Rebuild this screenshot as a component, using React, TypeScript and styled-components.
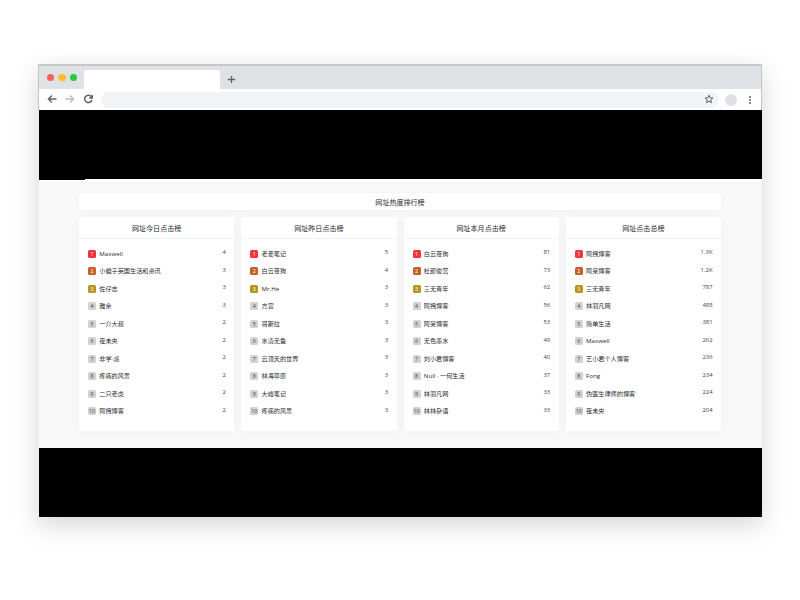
import React from 'react';
import styled, { createGlobalStyle } from 'styled-components';

const GlobalStyle = createGlobalStyle`
  * { box-sizing: border-box; }
  body {
    margin: 0;
    background: #fff;
    font-family: "Open Sans", "Noto Sans CJK SC", sans-serif;
    color: #282a2d;
  }
`;

const Stage = styled.div`
  width: 800px;
  height: 600px;
  padding: 64px 38px 0;
  overflow: hidden;
`;

const BrowserWindow = styled.div`
  width: 724px;
  height: 453px;
  padding-left: 1px;
  box-shadow: 0 8px 24px rgba(0, 0, 0, 0.17);
  background: #f0f0f0;
`;

const Chrome = styled.header`
  height: 46px;
  margin-left: -1px;
  border: solid #c6c6c6;
  border-width: 2px 1px 0;
  border-radius: 1px 1px 0 0;
  background: #fff;
`;

const TabBar = styled.div`
  display: flex;
  height: 23px;
  background: #dee1e6;
`;

const Lights = styled.div`
  display: flex;
  gap: 4px;
  width: 44.5px;
  padding: 7.5px 0 0 8px;
`;

const Light = styled.i<{ $color: string }>`
  width: 7.3px;
  height: 7.3px;
  border-radius: 50%;
  background: ${(p) => p.$color};
`;

const TabShelf = styled.div`
  width: 136px;
  padding-top: 4px;
`;

const Tab = styled.div`
  height: 19px;
  border-radius: 3px 3px 0 0;
  background: #fff;
`;

const NewTab = styled.div`
  padding: 9px 0 0 7.5px;
  line-height: 0;
`;

const Toolbar = styled.div`
  display: flex;
  align-items: center;
  height: 21px;
  padding: 0 6px 0 8px;
`;

const NavIcons = styled.div`
  display: flex;
  gap: 8px;
  width: 54px;
  margin-top: -1px;
`;

const Address = styled.div`
  display: flex;
  align-items: center;
  justify-content: flex-end;
  width: 618px;
  height: 16px;
  padding: 0 5px 1px 0;
  border-radius: 8px;
  background: #f1f3f4;
`;

const Avatar = styled.i`
  width: 12px;
  height: 12px;
  margin: 0 11px 0 6px;
  border-radius: 50%;
  background: #dee1e6;
`;

const DarkBand = styled.div`
  height: 69px;
  width: 723px;
  background: #000;
`;

const Strip = styled.div`
  height: 3px;
  width: 723px;
  background: #fff;
`;

const StripEdge = styled.div`
  width: 46px;
  height: 1px;
  background: #000;
`;

const Page = styled.main`
  width: 723px;
  height: 266px;
  padding: 11px 41px 0 40px;
  background: #f8f8f8;
`;

const Banner = styled.h1`
  margin: 0 0 7px;
  height: 17px;
  border-radius: 1.5px;
  background: #fff;
  box-shadow: 0 1px 8px rgba(0, 0, 0, 0.035);
  font-size: 7.05px;
  line-height: 18px;
  font-weight: 400;
  text-align: center;
`;

const Columns = styled.div`
  display: grid;
  grid-template-columns: repeat(4, 1fr);
  gap: 7px;
`;

const Card = styled.section`
  height: 214px;
  border-radius: 1.5px;
  background: #fff;
  box-shadow: 0 1px 8px rgba(0, 0, 0, 0.035);
`;

const CardTitle = styled.h2`
  margin: 0;
  height: 22px;
  border-bottom: 1px solid #f3f3f3;
  font-size: 7.05px;
  line-height: 23px;
  font-weight: 400;
  text-align: center;
`;

const Ranking = styled.ol`
  margin: 0;
  padding: 6px 8.5px 0 9px;
  list-style: none;
`;

const Entry = styled.li`
  display: flex;
  align-items: center;
  height: 17.5px;
  font-size: 6.15px;
  line-height: 10px;
  white-space: nowrap;
`;

const rankColors = ['#f5333f', '#c5602b', '#b5971f'];

const Rank = styled.span<{ $rank: number }>`
  width: 8px;
  height: 8px;
  margin-right: 3.3px;
  border-radius: 1.5px;
  background: ${(p) => rankColors[p.$rank - 1] ?? '#d2d2d2'};
  color: ${(p) => (p.$rank <= 3 ? '#fff' : '#444')};
  font-size: 5.3px;
  line-height: 8px;
  text-align: center;
`;

const Clicks = styled.span`
  margin-left: auto;
  padding-bottom: 3px;
  font-size: 5.9px;
  color: #444;
`;

type Board = { title: string; entries: [string, string][] };

const boards: Board[] = [
  {
    title: '网址今日点击榜',
    entries: [
      ['Maxwell', '4'], ['小貔子英国生活和资讯', '3'], ['佐仔志', '3'], ['雅余', '3'],
      ['一介大叔', '2'], ['夜未央', '2'], ['非学·派', '2'], ['疼痛的风景', '2'],
      ['二只老虎', '2'], ['阿拽博客', '2'],
    ],
  },
  {
    title: '网址昨日点击榜',
    entries: [
      ['老麦笔记', '5'], ['白云苍狗', '4'], ['Mr.He', '3'], ['方宣', '3'],
      ['哥斯拉', '3'], ['水清无鱼', '3'], ['云顶天的世界', '3'], ['林海草原', '3'],
      ['大峰笔记', '3'], ['疼痛的风景', '3'],
    ],
  },
  {
    title: '网址本月点击榜',
    entries: [
      ['白云苍狗', '81'], ['杜郎俊赏', '73'], ['三无青年', '62'], ['阿拽博客', '56'],
      ['阿呆博客', '53'], ['无色墨水', '49'], ['刘小君博客', '40'], ['Null · 一何生活', '37'],
      ['林羽凡网', '33'], ['林林杂语', '33'],
    ],
  },
  {
    title: '网址点击总榜',
    entries: [
      ['阿拽博客', '1.3K'], ['阿呆博客', '1.2K'], ['三无青年', '787'], ['林羽凡网', '488'],
      ['简单生活', '381'], ['Maxwell', '262'], ['艺小君个人博客', '236'], ['Fong', '234'],
      ['伪医生律师的博客', '224'], ['夜未央', '204'],
    ],
  },
];

const Icon = ({ d, color = '#5f6368', size = 10, width = 1.3 }: { d: string; color?: string; size?: number; width?: number }) => (
  <svg width={size} height={size} viewBox="0 0 10 10" fill="none" stroke={color} strokeWidth={width}>
    <path d={d} />
  </svg>
);

export default function App() {
  return (
    <>
      <GlobalStyle />
      <Stage>
        <BrowserWindow>
          <Chrome>
            <TabBar>
              <Lights>
                <Light $color="#ff5f57" />
                <Light $color="#febc2e" />
                <Light $color="#28c840" />
              </Lights>
              <TabShelf><Tab /></TabShelf>
              <NewTab><Icon d="M5 1V9M1 5H9" size={9} width={1.4} /></NewTab>
            </TabBar>
            <Toolbar>
              <NavIcons>
                <Icon d="M9.5 5H1.5M5 1.4L1.4 5L5 8.6" width={1.4} />
                <Icon d="M.5 5H8.5M5 1.4L8.6 5L5 8.6" color="#bbbdc0" width={1.4} />
                <Icon d="M8.9 6A3.7 3.7 0 1 1 8.2 2.5L9 3.7M9.3 1V4.1H6.2" width={1.5} />
              </NavIcons>
              <Address>
                <Icon d="M5 1.2L6.1 3.8L8.9 4L6.8 5.9L7.4 8.7L5 7.2L2.6 8.7L3.2 5.9L1.1 4L3.9 3.8Z" width={1} />
              </Address>
              <Avatar />
              <svg width="4" height="10" viewBox="0 0 4 10" fill="#5f6368">
                <circle cx="2" cy="2" r="1" />
                <circle cx="2" cy="5" r="1" />
                <circle cx="2" cy="8" r="1" />
              </svg>
            </Toolbar>
          </Chrome>
          <DarkBand />
          <Strip><StripEdge /></Strip>
          <Page>
            <Banner>网址热度排行榜</Banner>
            <Columns>
              {boards.map((board) => (
                <Card key={board.title}>
                  <CardTitle>{board.title}</CardTitle>
                  <Ranking>
                    {board.entries.map(([name, clicks], i) => (
                      <Entry key={name}>
                        <Rank $rank={i + 1}>{i + 1}</Rank>
                        <span>{name}</span>
                        <Clicks>{clicks}</Clicks>
                      </Entry>
                    ))}
                  </Ranking>
                </Card>
              ))}
            </Columns>
          </Page>
          <DarkBand />
        </BrowserWindow>
      </Stage>
    </>
  );
}
